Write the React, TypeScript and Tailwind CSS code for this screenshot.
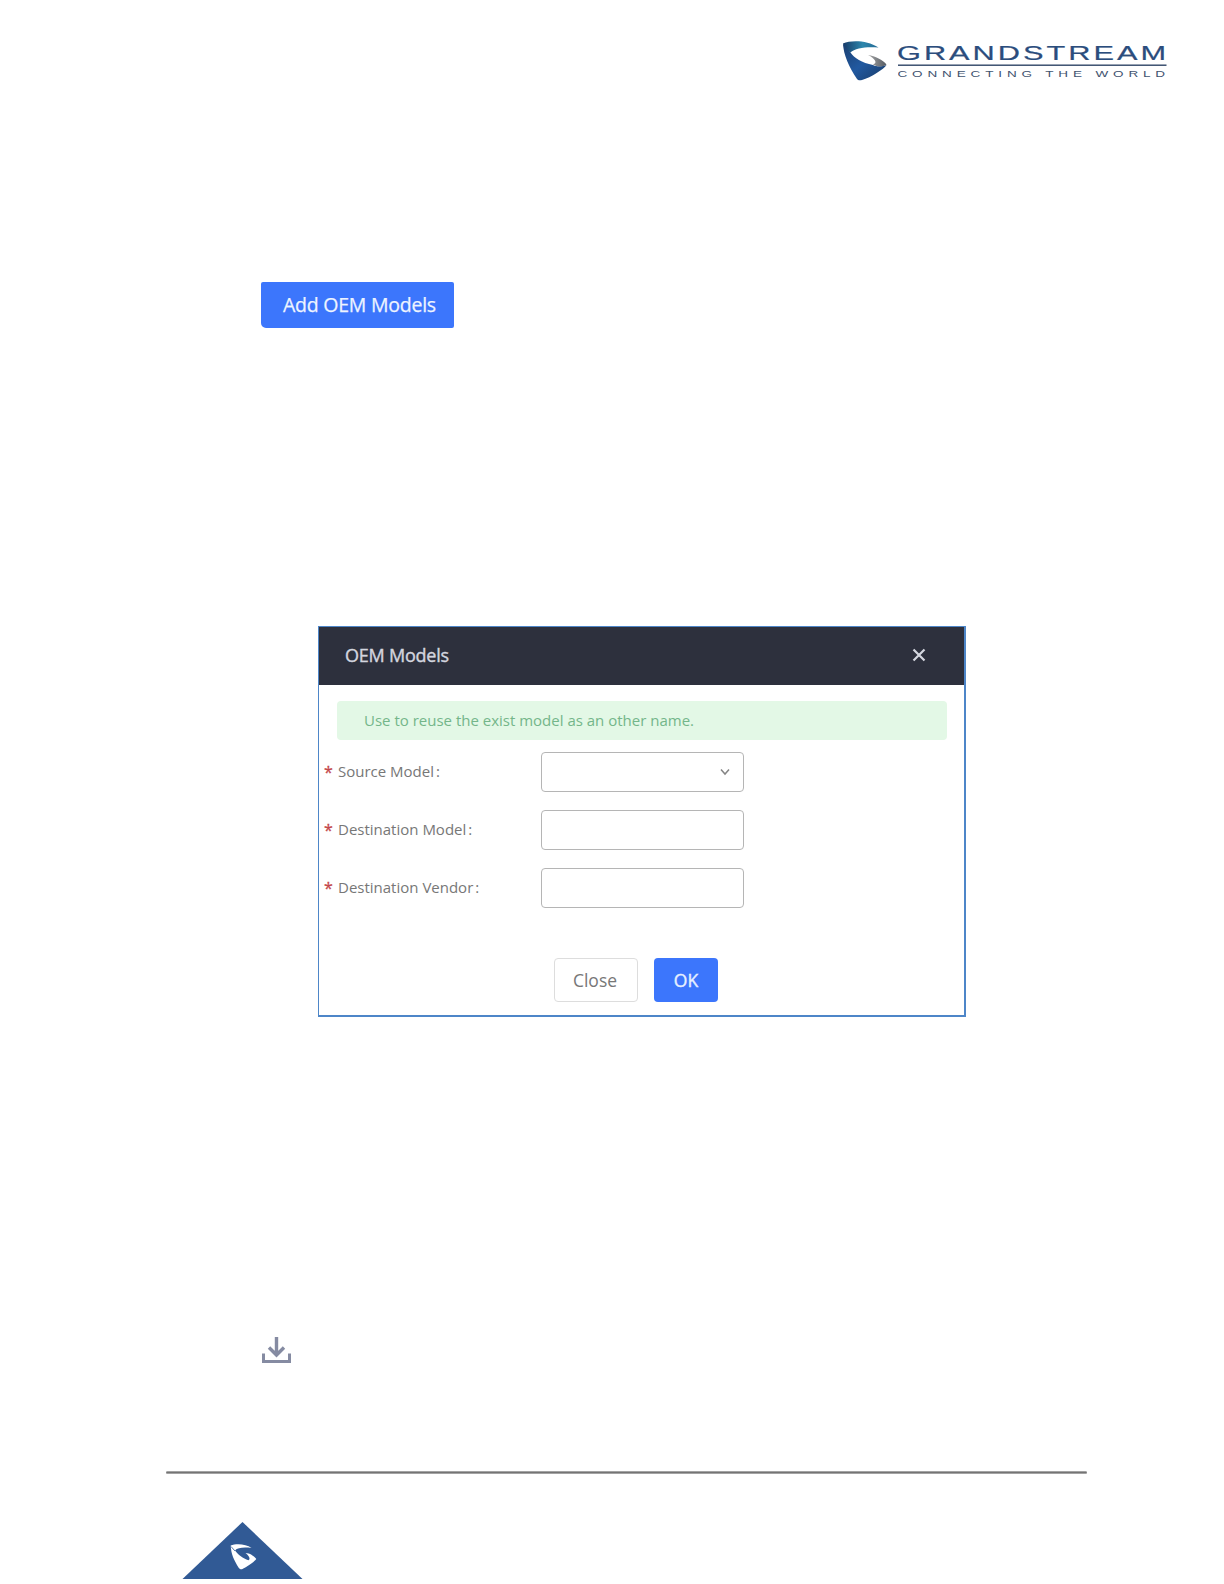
import React from "react";

function Emblem() {
  return (
    <svg className="h-[40px] w-[45px] shrink-0" viewBox="0 0 45 40" aria-hidden="true">
      <defs>
        <linearGradient id="top" x1="0" y1="0" x2="1" y2="0">
          <stop offset="0" stopColor="#173a68" />
          <stop offset="0.55" stopColor="#2c86ac" />
          <stop offset="1" stopColor="#256b95" />
        </linearGradient>
        <linearGradient id="body" x1="0" y1="0" x2="1" y2="1">
          <stop offset="0" stopColor="#1b3f70" />
          <stop offset="0.5" stopColor="#2159a0" />
          <stop offset="1" stopColor="#183a66" />
        </linearGradient>
        <linearGradient id="tip" x1="0" y1="0" x2="1" y2="0">
          <stop offset="0" stopColor="#a5a5a5" />
          <stop offset="1" stopColor="#555b63" />
        </linearGradient>
      </defs>
      <path d="M0 2.500C8 -1 24 -1 35.500 6.500C25 5.500 12 6.500 7.500 11.500L1.500 8Z" fill="url(#top)" />
      <path d="M0 2.500C2 6 4 8.500 7.500 11.500C11 17 19 22 30 24C35 26.500 40 25 43.500 24C41 28 28 36.500 19 39C17 39.500 15 39.500 14 38C6 26 0.500 14 0 2.500Z" fill="url(#body)" />
      <path d="M25 14C32 15 40 19 43.500 23.500C41 26 34 26 30 23.500C35 22 32 17.500 25 14Z" fill="url(#tip)" />
    </svg>
  );
}

function Brand() {
  return (
    <div className="flex gap-[10px]">
      <Emblem />
      <svg className="h-[40px] w-[270px]" viewBox="0 0 270 40" fontFamily="Liberation Sans, sans-serif">
        <text x="-1" y="18.500" fontSize="20.500" fill="#2b4d7d" stroke="#2b4d7d" strokeWidth="0.200" textLength="272" lengthAdjust="spacingAndGlyphs" letterSpacing="2">GRANDSTREAM</text>
        <rect x="0" y="23.500" width="268.500" height="1.400" fill="#2f4566" />
        <text x="-0.500" y="35.600" fontSize="8.400" fill="#3f536f" textLength="272.500" lengthAdjust="spacingAndGlyphs" letterSpacing="3">CONNECTING THE WORLD</text>
      </svg>
    </div>
  );
}

function Row({ label, select }: { label: string; select?: boolean }) {
  return (
    <label className="flex h-[40px] items-center">
      <span className="flex w-[217px] items-center whitespace-nowrap pb-[2px] text-[15px] leading-[20px] text-[#777777]">
        <span className="w-[14px] pt-[1px] text-[16px] text-[#c4474b] [-webkit-text-stroke:0.3px_#c4474b]">*</span>
        <span>{label}</span>
        <span className="ml-[2px]">:</span>
      </span>
      <span className="flex h-[40px] w-[203px] items-center justify-end rounded-[4px] border-[1.5px] border-[#b5b5b5] bg-white pr-[13px]">
        {select && (
          <svg className="h-[8px] w-[10px]" viewBox="0 0 10 8" fill="none" stroke="#858585" strokeWidth="1.500">
            <path d="M1 1.500L5 6L9 1.500" />
          </svg>
        )}
      </span>
    </label>
  );
}

export default function App() {
  return (
    <main className="flex h-[1584px] w-[1224px] flex-col overflow-hidden bg-white font-['Open_Sans',sans-serif]">
      <header className="flex h-[282px] justify-end pr-[56px] pt-[41px]">
        <Brand />
      </header>

      <button className="ml-[261px] flex h-[46px] w-[193px] shrink-0 items-center rounded-[2px] rounded-bl-[5px] bg-[#3c76fc] pl-[22px] text-[19.500px] tracking-[-0.240px] text-[#eef4ff] [-webkit-text-stroke:0.25px_#eef4ff]">
        <span className="whitespace-nowrap">Add OEM Models</span>
      </button>

      <section className="ml-[318px] mt-[298px] flex h-[391px] w-[648px] shrink-0 flex-col border-b-2 border-l border-r-2 border-t border-[#4e86c8]">
        <div className="flex h-[58px] shrink-0 items-center justify-between bg-[#2d303d] pb-[2px] pl-[26px] pr-[38px]">
          <h1 className="text-[18px] tracking-[-0.230px] text-[#d3d5df] [-webkit-text-stroke:0.4px_#d3d5df]">OEM Models</h1>
          <svg className="h-[14px] w-[14px]" viewBox="0 0 14 14" stroke="#d5d7e0" strokeWidth="2.200">
            <path d="M1.500 1.500L12.500 12.500M12.500 1.500L1.500 12.500" />
          </svg>
        </div>
        <div className="ml-[18px] mt-[16px] flex h-[39px] w-[610px] shrink-0 items-center rounded-[4px] bg-[#e3f8e6] pl-[27px] text-[15px] text-[#74b68a]">
          <span className="whitespace-nowrap">Use to reuse the exist model as an other name.</span>
        </div>
        <div className="mt-[12px] flex flex-col gap-[18px] pl-[5px]">
          <Row label="Source Model" select />
          <Row label="Destination Model" />
          <Row label="Destination Vendor" />
        </div>
        <div className="mt-[50px] flex gap-[16px] pl-[235px]">
          <button className="flex h-[44px] w-[84px] items-center justify-center rounded-[4px] border-[1.5px] border-[#dddddd] pr-[2px] text-[17.500px] text-[#777777]">Close</button>
          <button className="flex h-[44px] w-[64px] items-center justify-center rounded-[4px] bg-[#3c76fc] text-[17.500px] text-[#e6f0ff] [-webkit-text-stroke:0.4px_#e6f0ff]">OK</button>
        </div>
      </section>

      <svg className="ml-[262px] mt-[319px] h-[28px] w-[29px] shrink-0" viewBox="0 0 29 28" fill="none" stroke="#858ba2" strokeWidth="3">
        <path d="M1.500 17.500V25.500H27.500V17.500" />
        <path d="M14.500 1V19M7 11.500L14.500 19L22 11.500" strokeWidth="3.400" />
      </svg>

      <div className="ml-[166px] mt-[107px] h-[3px] w-[921px] shrink-0 rounded-full border-y border-[#a3a3a3] bg-[#747474]" />

      <svg className="ml-[182px] mt-[48px] h-[57px] w-[121px] shrink-0" viewBox="0 0 121 57">
        <path d="M60.500 0L120.500 57H0.500Z" fill="#315a95" />
        <path d="M48.700 23.500C54 21.300 64 21.800 69.500 26C63 25.200 55.500 25.300 53 28.500C56 32.500 61 36.500 66.500 38.200C69 36.500 66.500 33.500 63.500 31C68 31.200 72 34 74.300 37C71 41 65 45 60 47.200C58.500 47.600 57.500 47 56.500 45.500C52 38 49 32 48.700 23.500Z" fill="white" />
        <path d="M49 24.500L53 29" stroke="#315a95" strokeWidth="0.800" />
      </svg>
    </main>
  );
}
